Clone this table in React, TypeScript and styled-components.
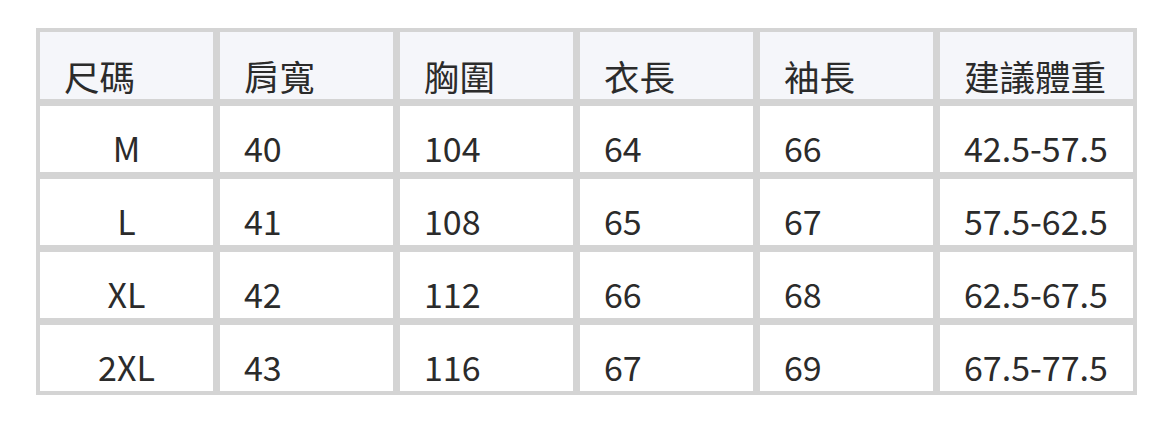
import React from 'react';
import styled, { createGlobalStyle } from 'styled-components';

const GlobalStyle = createGlobalStyle`
  html, body {
    margin: 0;
    padding: 0;
    background: #ffffff;
  }

  body {
    font-family: "Noto Sans CJK TC", "Noto Sans", sans-serif;
    color: #333333;
  }
`;

const Page = styled.div`
  padding: 28px 0 0 36px;
`;

const Table = styled.table`
  background: #d4d4d4;
  border-collapse: separate;
  border-spacing: 1px;
  table-layout: fixed;
  width: 1101px;
`;

const Col = styled.col<{ $wide?: boolean }>`
  width: ${(p) => (p.$wide ? 199 : 179)}px;
`;

const Cell = styled.td<{ $center?: boolean; $head?: boolean }>`
  background: ${(p) => (p.$head ? '#f5f6fa' : '#ffffff')};
  border: 3px solid #d4d4d4;
  box-sizing: border-box;
  color: #2b2b2b;
  font-size: ${(p) => (p.$head ? 35.5 : 34)}px;
  font-weight: 400;
  height: ${(p) => (p.$head ? 73 : 72)}px;
  line-height: 36px;
  padding: 24px 24px ${(p) => (p.$head ? 5 : 6)}px;
  text-align: ${(p) => (p.$center ? 'center' : 'left')};
  vertical-align: bottom;
  white-space: nowrap;
`;

const HEAD = ['尺碼', '肩寬', '胸圍', '衣長', '袖長', '建議體重'];

const ROWS = [
  ['M', '40', '104', '64', '66', '42.5-57.5'],
  ['L', '41', '108', '65', '67', '57.5-62.5'],
  ['XL', '42', '112', '66', '68', '62.5-67.5'],
  ['2XL', '43', '116', '67', '69', '67.5-77.5'],
];

export default function App() {
  return (
    <Page>
      <GlobalStyle />
      <Table>
        <colgroup>
          {HEAD.map((h, i) => (
            <Col key={h} $wide={i === HEAD.length - 1} />
          ))}
        </colgroup>
        <thead>
          <tr>
            {HEAD.map((h) => (
              <Cell as="th" key={h} $head>
                {h}
              </Cell>
            ))}
          </tr>
        </thead>
        <tbody>
          {ROWS.map((row) => (
            <tr key={row[0]}>
              {row.map((v, i) => (
                <Cell key={i} $center={i === 0}>
                  {v}
                </Cell>
              ))}
            </tr>
          ))}
        </tbody>
      </Table>
    </Page>
  );
}
